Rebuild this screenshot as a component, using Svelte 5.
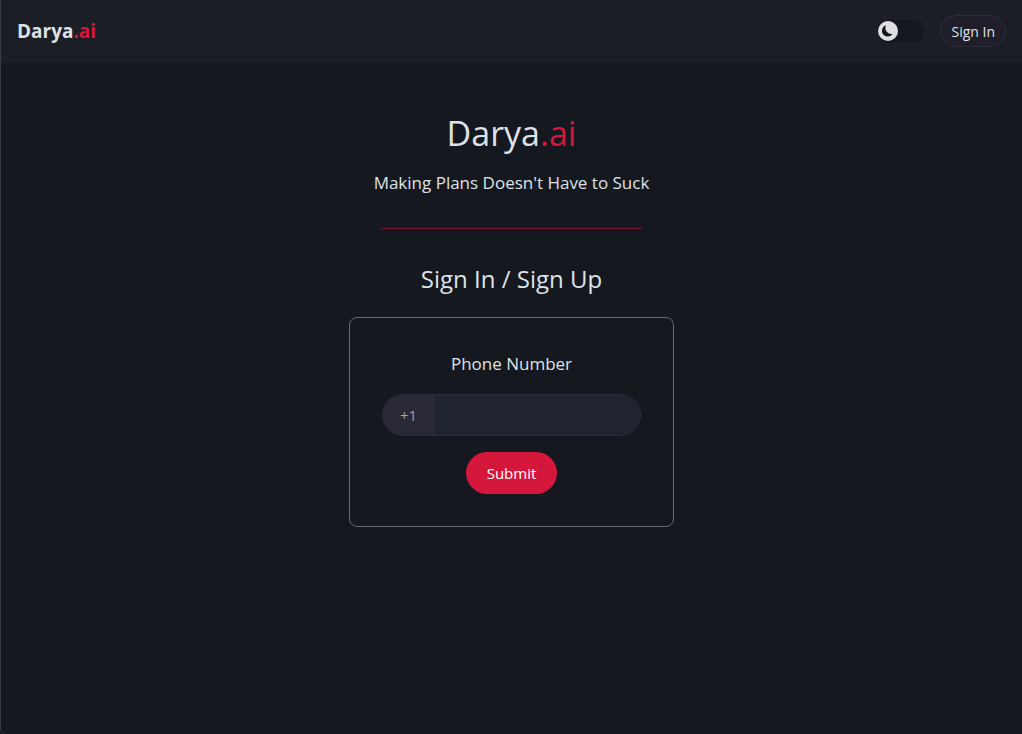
<script lang="ts">
  let dark = $state(true);
  let phone = $state('');

  function submit(e: SubmitEvent) {
    e.preventDefault();
  }
</script>

<div class="page">
  <header class="navbar">
    <a class="brand" href="/">Darya<span class="accent">.ai</span></a>
    <div class="actions">
      <label class="theme">
        <input type="checkbox" role="switch" aria-label="Dark mode" bind:checked={dark} />
        <svg class="knob" class:light={!dark} viewBox="0 0 20 20" aria-hidden="true">
          <circle cx="10" cy="10" r="10" fill="#dedfe3" />
          <path
            d="M8 4.2 A5.8 5.8 0 1 0 14.5 13 A6.2 6.2 0 0 1 8 4.2 Z"
            fill="#15171e"
          />
        </svg>
      </label>
      <button class="sign-in" type="button">Sign In</button>
    </div>
  </header>

  <main>
    <h1>Darya<span class="accent">.ai</span></h1>
    <p class="tagline">Making Plans Doesn't Have to Suck</p>
    <hr />
    <h2>Sign In / Sign Up</h2>

    <form class="card" onsubmit={submit}>
      <label class="field-label" for="phone">Phone Number</label>
      <div class="input-group">
        <span class="prefix">+1</span>
        <input id="phone" type="tel" autocomplete="tel-national" bind:value={phone} />
      </div>
      <button class="submit" type="submit">Submit</button>
    </form>
  </main>
</div>

<style>
  :global(body) {
    background: #15171e;
  }

  .page {
    box-sizing: border-box;
    min-height: 100vh;
    border-left: 1px solid #3d3c42;
    border-radius: 0 0 6px 6px;
    background: #15181f;
    color: #dee2e6;
    font-family: 'Segoe UI', 'Open Sans', 'Noto Sans', sans-serif;
  }
  .accent { color: #d6173c; }

  /* Navbar */
  .navbar {
    display: flex;
    align-items: center;
    justify-content: space-between;
    padding: 15px 16px 16px;
    background: #1c1e26;
  }
  .brand {
    font-size: 19px;
    font-weight: 700;
    line-height: 32px;
    color: #dee2e6;
    text-decoration: none;
  }
  .actions {
    display: flex;
    align-items: center;
    gap: 14px;
  }
  .theme {
    position: relative;
    display: block;
    height: 26px;
  }
  .theme input {
    appearance: none;
    display: block;
    box-sizing: border-box;
    width: 50px;
    height: 26px;
    margin: 0;
    border: 1px solid #20222d;
    border-radius: 13px;
    background: #15181f;
    cursor: pointer;
  }
  .knob {
    position: absolute;
    top: 3px;
    left: 2px;
    width: 20px;
    height: 20px;
    pointer-events: none;
    transition: left 0.2s;
  }
  .knob.light { left: 28px; }
  .sign-in {
    height: 32px;
    padding: 0 10px;
    border: 1px solid #2b2b3c;
    border-radius: 16px;
    background: #1f1e29;
    color: #dee2e6;
    font: inherit;
    font-size: 14px;
    cursor: pointer;
  }

  /* Content */
  main {
    display: flex;
    flex-direction: column;
    align-items: center;
    padding: 48px 16px;
  }
  h1, h2, p { margin: 0; }
  h1 {
    font-size: 34px;
    font-weight: 400;
    line-height: 44px;
  }
  .tagline {
    margin-top: 14px;
    font-size: 17px;
    line-height: 28px;
  }
  hr {
    width: 261px;
    max-width: 100%;
    height: 1px;
    margin: 31px 0 32px;
    border: none;
    background: #7b162d;
  }
  h2 {
    font-size: 24px;
    font-weight: 400;
    line-height: 36px;
  }

  .card {
    display: flex;
    flex-direction: column;
    align-items: center;
    gap: 16px;
    box-sizing: border-box;
    width: 325px;
    max-width: 100%;
    margin-top: 20px;
    padding: 32px;
    border: 1px solid #6b666b;
    border-radius: 8px;
  }
  .field-label {
    font-size: 17px;
    line-height: 28px;
  }
  .input-group {
    display: flex;
    box-sizing: border-box;
    width: 100%;
    height: 42px;
    border: 1px solid #2c2c3f;
    border-radius: 21px;
    overflow: hidden;
  }
  .prefix {
    display: flex;
    align-items: center;
    padding: 0 17px;
    border-right: 1px solid #2c2c3f;
    background: #282935;
    color: #9ea1a8;
    font-size: 15px;
  }
  .input-group input {
    flex: 1;
    min-width: 0;
    padding: 0 16px;
    border: none;
    outline: none;
    background: #20242f;
    color: inherit;
    font: inherit;
    font-size: 15px;
  }
  .submit {
    height: 42px;
    padding: 0 21px;
    border: none;
    border-radius: 21px;
    background: #d6173c;
    color: #fff;
    font: inherit;
    font-size: 15px;
    cursor: pointer;
  }
</style>
